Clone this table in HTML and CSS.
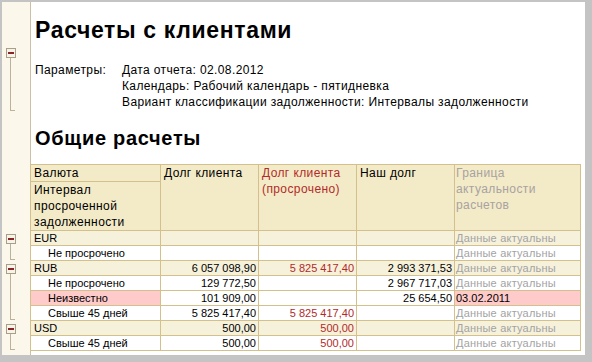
FILE: index.html
```html
<!DOCTYPE html>
<html lang="ru">
<head>
<meta charset="utf-8">
<title>Расчеты с клиентами</title>
<link rel="stylesheet" href="styles.css">
</head>
<body>
<div class="frame">
  <div class="gutter">
    <div class="group g-params"><div class="box"><span class="minus"></span></div><div class="line l-params"></div></div>
    <div class="group g-eur"><div class="box"><span class="minus"></span></div><div class="line l-short"></div></div>
    <div class="group g-rub"><div class="box"><span class="minus"></span></div><div class="line l-rub"></div></div>
    <div class="group g-usd"><div class="box"><span class="minus"></span></div><div class="line l-usd"></div></div>
  </div>
  <div class="doc">
    <h1 class="title">Расчеты с клиентами</h1>
    <div class="params">
      <div class="params-label">Параметры:</div>
      <div class="params-values">
        <div>Дата отчета: 02.08.2012</div>
        <div>Календарь: Рабочий календарь - пятидневка</div>
        <div>Вариант классификации задолженности: Интервалы задолженности</div>
      </div>
    </div>
    <h2 class="subtitle">Общие расчеты</h2>
    <table class="report">
      <colgroup>
        <col class="c1"><col class="c2"><col class="c3"><col class="c4"><col class="c5">
      </colgroup>
      <thead>
        <tr class="h1row">
          <th class="hcell">Валюта</th>
          <th class="hcell" rowspan="2">Долг клиента</th>
          <th class="hcell red" rowspan="2">Долг клиента (просрочено)</th>
          <th class="hcell" rowspan="2">Наш долг</th>
          <th class="hcell gray last" rowspan="2">Граница актуальности расчетов</th>
        </tr>
        <tr class="h2row">
          <th class="hcell">Интервал просроченной задолженности</th>
        </tr>
      </thead>
      <tbody>
        <tr class="grp">
          <td class="name">EUR</td><td class="num"></td><td class="num red"></td><td class="num"></td><td class="stat">Данные актуальны</td>
        </tr>
        <tr class="item">
          <td class="name sub">Не просрочено</td><td class="num"></td><td class="num red"></td><td class="num"></td><td class="stat">Данные актуальны</td>
        </tr>
        <tr class="grp">
          <td class="name">RUB</td><td class="num">6 057 098,90</td><td class="num red">5 825 417,40</td><td class="num">2 993 371,53</td><td class="stat">Данные актуальны</td>
        </tr>
        <tr class="item">
          <td class="name sub">Не просрочено</td><td class="num">129 772,50</td><td class="num red"></td><td class="num">2 967 717,03</td><td class="stat">Данные актуальны</td>
        </tr>
        <tr class="item">
          <td class="name sub pink">Неизвестно</td><td class="num">101 909,00</td><td class="num red"></td><td class="num">25 654,50</td><td class="stat pink dark">03.02.2011</td>
        </tr>
        <tr class="item">
          <td class="name sub">Свыше 45 дней</td><td class="num">5 825 417,40</td><td class="num red">5 825 417,40</td><td class="num"></td><td class="stat">Данные актуальны</td>
        </tr>
        <tr class="grp">
          <td class="name">USD</td><td class="num">500,00</td><td class="num red">500,00</td><td class="num"></td><td class="stat">Данные актуальны</td>
        </tr>
        <tr class="item">
          <td class="name sub">Свыше 45 дней</td><td class="num">500,00</td><td class="num red">500,00</td><td class="num"></td><td class="stat">Данные актуальны</td>
        </tr>
      </tbody>
    </table>
  </div>
</div>
</body>
</html>
```
FILE: styles.css
```css
* { box-sizing: border-box; }
html, body { margin: 0; padding: 0; }
body {
  width: 592px;
  height: 362px;
  overflow: hidden;
  font-family: "Liberation Sans", Arial, sans-serif;
  color: #000;
  background: #c4c4c4;
}
.frame {
  width: 592px;
  height: 362px;
  border-style: solid;
  border-color: #c4c4c4;
  border-width: 2px 7px 7px 2px;
  background: #fff;
  display: flex;
  overflow: hidden;
}
.gutter {
  flex: 0 0 29px;
  background: #fbf8eb;
  border-right: 1px solid #c9c0a6;
  display: flex;
  flex-direction: column;
}
.group { margin-left: 4px; display: flex; flex-direction: column; }
.g-params { margin-top: 46px; }
.g-eur { margin-top: 123px; }
.g-rub { margin-top: 4px; }
.g-usd { margin-top: 4px; }
.box {
  width: 10px;
  height: 10px;
  border: 1px solid #a99f88;
  background: #f6f3e8;
  display: flex;
  align-items: center;
  justify-content: center;
}
.minus { width: 6px; height: 2px; background: #8a2424; }
.line {
  margin-left: 4px;
  width: 5px;
  border-left: 1px solid #bcb29a;
  border-bottom: 1px solid #bcb29a;
}
.l-params { height: 53px; }
.l-short { height: 16px; }
.l-rub { height: 46px; }
.l-usd { height: 16px; }

.doc {
  flex: 1;
  padding: 15px 0 0 4px;
  min-width: 0;
}
.title {
  margin: 0;
  font-size: 23px;
  line-height: 26px;
  letter-spacing: 0.65px;
  font-weight: bold;
}
.params {
  margin-top: 19px;
  display: flex;
  font-size: 12px;
  letter-spacing: 0.38px;
  line-height: 16px;
}
.params-label { width: 87px; flex: 0 0 87px; }
.subtitle {
  margin: 17px 0 0;
  font-size: 20px;
  line-height: 22px;
  letter-spacing: 0.7px;
  font-weight: bold;
}
.report {
  margin: 15px 0 0 -5px;
  border-collapse: collapse;
  table-layout: fixed;
  width: 551px;
  font-size: 11px;
}
.c1 { width: 130px; }
.c2, .c3, .c4 { width: 98px; }
.c5 { width: 126px; }
.report th, .report td {
  border: 1px solid #d3c08a;
  padding: 0 3px;
  white-space: nowrap;
  overflow: hidden;
}
.hcell {
  background: #f3eac7;
  font-weight: normal;
  text-align: left;
  vertical-align: top;
  font-size: 12px;
  letter-spacing: 0.4px;
  line-height: 16px;
  white-space: normal !important;
}
.h1row { height: 17px; }
.h2row .hcell { height: 49px; }
.hcell.last { padding-left: 1px; }
.report td { height: 15px; line-height: 14px; }
.grp td { background: #f6f1db; }
.item td { background: #fff; }
.name.sub { padding-left: 17px; }
.num { text-align: right; padding: 0 2px !important; }
.red { color: #b22a2a; }
.gray { color: #a8a2a2; }
.stat { color: #a3a3a3; padding-left: 1px !important; letter-spacing: 0.2px; }
.report td.pink { background: #ffcaca; }
.dark { color: #000; letter-spacing: 0; }
```
